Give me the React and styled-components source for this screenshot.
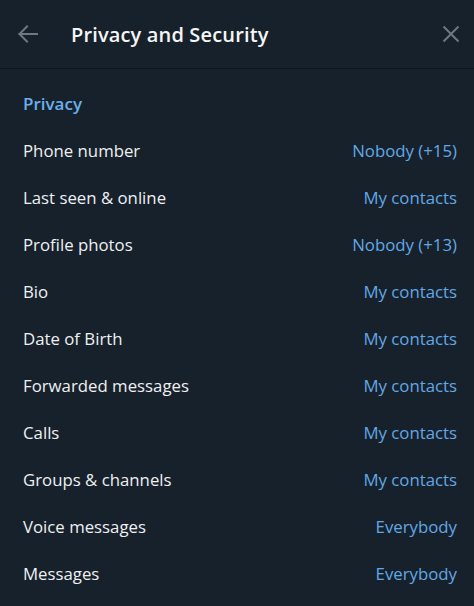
import React from "react";
import styled, { createGlobalStyle } from "styled-components";

const Global = createGlobalStyle`
  html, body { margin: 0; padding: 0; background: #17212b; }
  body { font-family: "Open Sans", "Noto Sans", sans-serif; -webkit-font-smoothing: antialiased; }
`;

const Panel = styled.div`
  width: 474px;
  height: 606px;
  background: #17212b;
  overflow: hidden;
  display: flex;
  flex-direction: column;
`;

const Header = styled.header`
  height: 68px;
  display: flex;
  align-items: center;
  border-bottom: 1px solid #0f161e;
  flex-shrink: 0;
`;

const IconButton = styled.button`
  background: none;
  border: none;
  padding: 0;
  width: ${(p) => p.$w}px;
  height: 68px;
  display: flex;
  align-items: center;
  justify-content: center;
  color: #6d7883;
  cursor: pointer;
`;

const Title = styled.h1`
  flex: 1;
  margin: 0 0 0 15px;
  font-size: 20px;
  font-weight: 600;
  color: #f5f5f5;
  letter-spacing: 0.15px;
`;

const Body = styled.div`
  padding-top: 12px;
  display: flex;
  flex-direction: column;
`;

const SectionTitle = styled.div`
  height: 46px;
  line-height: 46px;
  padding-left: 23px;
  font-size: 17px;
  font-weight: 600;
  color: #6aafec;
`;

const Row = styled.div`
  height: 47px;
  display: flex;
  align-items: center;
  justify-content: space-between;
  padding: 0 17px 0 23px;
  font-size: 16.8px;
`;

const Label = styled.span`
  color: #eef0f2;
`;

const Value = styled.span`
  color: #62a8e6;
`;

const rows = [
  ["Phone number", "Nobody (+15)"],
  ["Last seen & online", "My contacts"],
  ["Profile photos", "Nobody (+13)"],
  ["Bio", "My contacts"],
  ["Date of Birth", "My contacts"],
  ["Forwarded messages", "My contacts"],
  ["Calls", "My contacts"],
  ["Groups & channels", "My contacts"],
  ["Voice messages", "Everybody"],
  ["Messages", "Everybody"],
];

export default function App() {
  return (
    <Panel>
      <Global />
      <Header>
        <IconButton $w={56} aria-label="Back">
          <svg width="22" height="22" viewBox="0 0 22 22" fill="none" stroke="currentColor" strokeWidth="2" strokeLinecap="square">
            <path d="M2.5 11H20" />
            <path d="M10 3.5L2.5 11L10 18.5" />
          </svg>
        </IconButton>
        <Title>Privacy and Security</Title>
        <IconButton $w={46} aria-label="Close">
          <svg width="18" height="18" viewBox="0 0 18 18" fill="none" stroke="currentColor" strokeWidth="2">
            <path d="M1.5 1.5L16.5 16.5M16.5 1.5L1.5 16.5" />
          </svg>
        </IconButton>
      </Header>
      <Body>
        <SectionTitle>Privacy</SectionTitle>
        {rows.map(([l, v]) => (
          <Row key={l}>
            <Label>{l}</Label>
            <Value>{v}</Value>
          </Row>
        ))}
      </Body>
    </Panel>
  );
}
